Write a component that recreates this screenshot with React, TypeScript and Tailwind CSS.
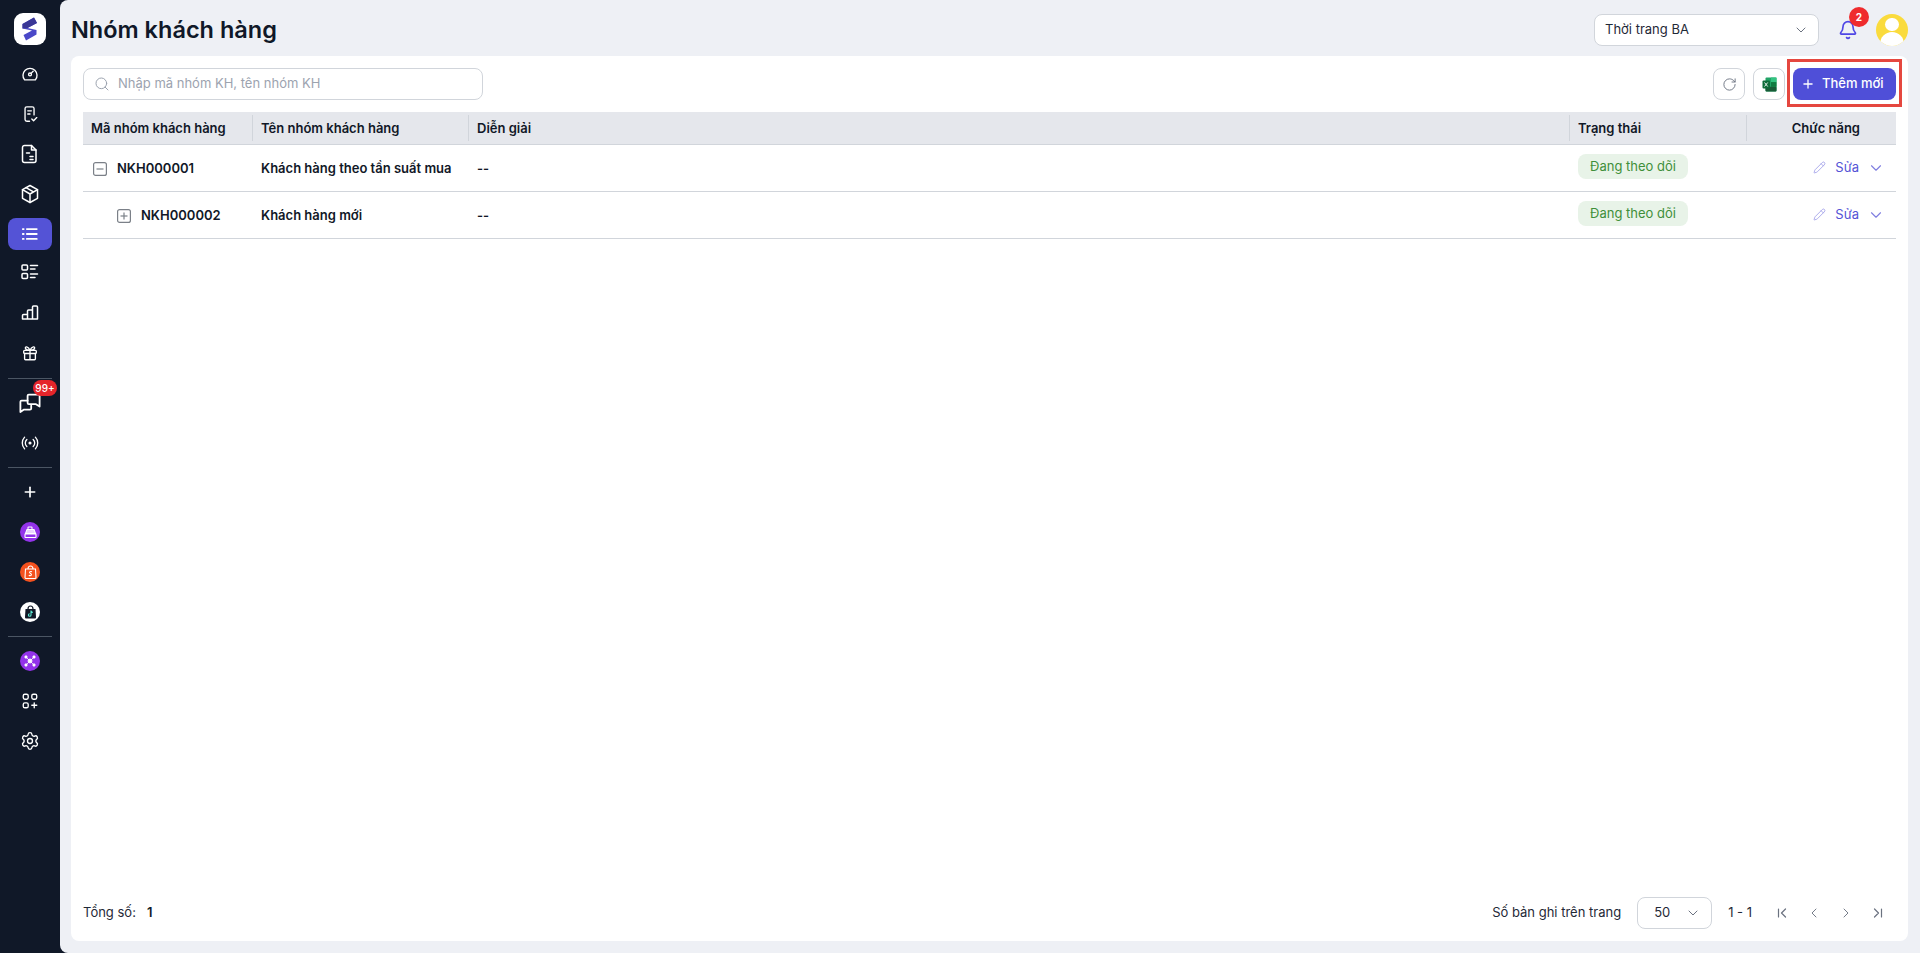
import { ChevronDown, Pencil, Plus, RotateCw, Search, Bell, ChevronLeft, ChevronRight, Settings } from "lucide-react";
import type { ReactNode } from "react";

const stroke = {
  fill: "none",
  stroke: "currentColor",
  strokeWidth: 1.5,
  strokeLinecap: "round" as const,
  strokeLinejoin: "round" as const,
};

function Ico({ children, size = 18 }: { children: ReactNode; size?: number }) {
  return (
    <svg width={size} height={size} viewBox="0 0 20 20" {...stroke}>
      {children}
    </svg>
  );
}

function Logo() {
  return (
    <svg width="20" height="24" viewBox="0 0 20 24">
      <path d="M14 0.500 L17 6 L7.500 11 L16.500 13 L16.500 17.500 L6 23.500 L3.500 18 L12 13.500 L2.500 11.500 L2.500 7 Z" fill="#4a48c8" />
      <path d="M14 0.500 L17 6 L7.500 11 L2.500 11.500 L2.500 7 Z" fill="#3a3796" />
    </svg>
  );
}

function Item({ children, cls = "mb-2" }: { children: ReactNode; cls?: string }) {
  return <div className={`w-8 h-8 flex items-center justify-center ${cls}`}>{children}</div>;
}

function Divider({ cls }: { cls: string }) {
  return <div className={`w-11 h-px bg-[#4b5563] ${cls}`} />;
}

function Sidebar() {
  return (
    <aside className="w-[60px] h-full shrink-0 bg-[#101828] flex flex-col items-center pt-[13px] text-white">
      <div className="w-8 h-8 rounded-[9px] bg-white flex items-center justify-center mb-[13px]">
        <Logo />
      </div>
      <Item>
        <Ico>
          <path d="M4 16.500 a7.800 7.800 0 1 1 12 0 Z" />
          <circle cx="10" cy="10.500" r="1.600" />
          <path d="M11.200 9.300 L13.500 7" />
        </Ico>
      </Item>
      <Item>
        <Ico>
          <path d="M9.500 18 H6.500 a2 2 0 0 1 -2 -2 V4 a2 2 0 0 1 2 -2 h6 a2 2 0 0 1 2 2 v7" />
          <path d="M7.500 6.500 h4 M7.500 10 h2.500" />
          <path d="M12 15.500 l2 2 l3.500 -3.500" />
        </Ico>
      </Item>
      <Item>
        <Ico size={20}>
          <path d="M4.500 1.500 h7 l4.500 4.500 v10.500 a2 2 0 0 1 -2 2 h-9.500 a2 2 0 0 1 -2 -2 v-13 a2 2 0 0 1 2 -2 Z" />
          <path d="M11.500 1.500 v4.500 h4.500" />
          <path d="M6.500 9 h3 M10 12.500 h3 M10 15.500 h3" />
        </Ico>
      </Item>
      <Item>
        <Ico size={20}>
          <path d="M10 1.500 l7.500 4.200 v8.600 l-7.500 4.200 l-7.500 -4.200 v-8.600 Z" />
          <path d="M2.500 5.700 l7.500 4.300 l7.500 -4.300 M10 10 v8.500 M6 3.600 l7.500 4.300" />
        </Ico>
      </Item>
      <div className="w-11 h-8 rounded-lg bg-[#5453d6] flex items-center justify-center mb-[6px]">
        <Ico size={18}>
          <path d="M6.500 4.500 h11 M6.500 10 h11 M6.500 15.500 h11" strokeWidth="2" />
          <path d="M2 4.500 h1 M2 10 h1 M2 15.500 h1" strokeWidth="2" />
        </Ico>
      </div>
      <Item>
        <Ico size={20}>
          <rect x="2" y="3" width="5.500" height="5" rx="1" />
          <rect x="2" y="11.500" width="5.500" height="5" rx="1" />
          <path d="M10.500 3.500 h7 M10.500 7 h4.500 M10.500 12 h7 M10.500 15.500 h4.500" />
        </Ico>
      </Item>
      <Item cls="mb-[9px]">
        <Ico size={20}>
          <path d="M2.500 17 v-3.500 a1 1 0 0 1 1 -1 h4 v4.500 Z M7.500 17 v-8 a1 1 0 0 1 1 -1 h3 a1 1 0 0 1 1 1 v8 Z M12.500 17 v-12 a1 1 0 0 1 1 -1 h3 a1 1 0 0 1 1 1 v12 Z" />
        </Ico>
      </Item>
      <Item cls="mb-0">
        <Ico>
          <rect x="3" y="7" width="14" height="3.500" rx="1" />
          <path d="M4 10.500 v6 a1 1 0 0 0 1 1 h10 a1 1 0 0 0 1 -1 v-6 M10 7 v10.500" />
          <path d="M10 7 C8 2 4 2.500 5 5 C5.500 6.500 8 7 10 7 C12 7 14.500 6.500 15 5 C16 2.500 12 2 10 7 Z" />
        </Ico>
      </Item>
      <Divider cls="mt-[9px] mb-2" />
      <div className="relative w-8 h-8 flex items-center justify-center mb-2">
        <Ico size={24}>
          <path d="M8 8 H3 a1 1 0 0 0 -1 1 v8.500 l3 -2 h5 a1 1 0 0 0 1 -1 v-2.500" />
          <path d="M9 3 h8 a1 1 0 0 1 1 1 v9 l-3 -2 h-6 a1 1 0 0 1 -1 -1 v-6 a1 1 0 0 1 1 -1 z" />
        </Ico>
        <span className="absolute -top-[7px] -right-[11px] h-4 w-6 rounded-full bg-[#e5252a] text-[10px] leading-4 text-center font-medium text-white">
          99+
        </span>
      </div>
      <Item cls="mb-0">
        <Ico size={18}>
          <circle cx="10" cy="10" r="1" fill="currentColor" />
          <path d="M6.500 6 a5.500 5.500 0 0 0 0 8 M13.500 6 a5.500 5.500 0 0 1 0 8 M4 3.500 a9.500 9.500 0 0 0 0 13 M16 3.500 a9.500 9.500 0 0 1 0 13" />
        </Ico>
      </Item>
      <Divider cls="mt-2 mb-2" />
      <Item>
        <Plus size={16} strokeWidth={2.5} />
      </Item>
      <Item>
        <span className="w-5 h-5 rounded-full bg-[#9333ea] flex items-center justify-center">
          <svg width="13" height="13" viewBox="0 0 13 13" fill="none" stroke="white" strokeWidth="1.100">
            <rect x="4" y="1" width="4" height="2.500" rx="0.500" />
            <path d="M3 3.500 h7 l1.500 4 h-10 Z" fill="#e9d5ff" />
            <rect x="1" y="8" width="11" height="3.500" rx="0.500" />
          </svg>
        </span>
      </Item>
      <Item>
        <span className="w-5 h-5 rounded-full bg-[#f4511e] flex items-center justify-center">
          <svg width="13" height="14" viewBox="0 0 13 14" fill="none" stroke="white" strokeWidth="1.100">
            <path d="M1.500 4 h10 l0.500 8.500 a1 1 0 0 1 -1 1 h-9 a1 1 0 0 1 -1 -1 Z" />
            <path d="M4 4 a2.500 3 0 0 1 5 0" />
            <path d="M8 6.800 C6 5.800 4.500 7.500 6.500 8.500 C8.500 9.500 7 11.500 4.800 10.300" />
          </svg>
        </span>
      </Item>
      <Item cls="mb-0">
        <span className="w-5 h-5 rounded-full bg-white flex items-center justify-center">
          <svg width="13" height="14" viewBox="0 0 13 14">
            <path d="M1.500 4 h10 l0.500 8.500 a1 1 0 0 1 -1 1 h-9 a1 1 0 0 1 -1 -1 Z" fill="#111827" />
            <path d="M4 4 a2.500 3 0 0 1 5 0" fill="none" stroke="#111827" strokeWidth="1.200" />
            <path d="M7 5.500 v4.500 a1.300 1.300 0 1 1 -1.300 -1.300 M7 5.800 c0.300 1 1 1.500 1.800 1.600" fill="none" stroke="#5eead4" strokeWidth="1.100" />
          </svg>
        </span>
      </Item>
      <Divider cls="mt-2 mb-2" />
      <Item>
        <span className="w-5 h-5 rounded-full bg-[#9333ea] flex items-center justify-center">
          <svg width="12" height="12" viewBox="0 0 12 12" fill="white" stroke="white" strokeWidth="0.800">
            <path d="M2 2 L10 10 M10 2 L2 10" />
            <circle cx="6" cy="6" r="2" />
            <circle cx="2" cy="2" r="1.200" />
            <circle cx="10" cy="2" r="1.200" />
            <circle cx="2" cy="10" r="1.200" />
            <circle cx="10" cy="10" r="1.200" />
          </svg>
        </span>
      </Item>
      <Item>
        <Ico size={18}>
          <rect x="2.500" y="2.500" width="5.500" height="5.500" rx="1.800" />
          <rect x="12" y="2.500" width="5.500" height="5.500" rx="1.800" />
          <rect x="2.500" y="12" width="5.500" height="5.500" rx="1.800" />
          <path d="M14.700 12 v5.500 M12 14.700 h5.500" />
        </Ico>
      </Item>
      <Item cls="mb-0">
        <Settings size={20} strokeWidth={1.6} />
      </Item>
    </aside>
  );
}

function ExcelIcon() {
  return (
    <svg width="15" height="15" viewBox="0 0 15 15">
      <rect x="3.500" y="0.500" width="11" height="14" rx="1" fill="#21a366" />
      <rect x="9" y="0.500" width="5.500" height="4.600" fill="#33c481" />
      <rect x="9" y="5.100" width="5.500" height="4.600" fill="#107c41" />
      <rect x="3.500" y="9.700" width="11" height="4.800" rx="1" fill="#185c37" />
      <rect x="0.500" y="3.500" width="7.500" height="8" rx="1" fill="#0f6b3a" />
      <path d="M2.500 5.500 L5.700 9.500 M5.700 5.500 L2.500 9.500" stroke="white" strokeWidth="0.900" />
    </svg>
  );
}

function TreeBox({ open }: { open: boolean }) {
  return (
    <svg width="14" height="14" viewBox="0 0 14 14" fill="none" stroke="#7b8088" strokeWidth="1.200">
      <rect x="0.600" y="0.600" width="12.800" height="12.800" rx="2" />
      <path d="M3.500 7 h7" />
      {!open && <path d="M7 3.500 v7" />}
    </svg>
  );
}

const rows = [
  { code: "NKH000001", name: "Khách hàng theo tần suất mua", open: true, indent: "pl-[10px]" },
  { code: "NKH000002", name: "Khách hàng mới", open: false, indent: "pl-[34px]" },
];

function Row({ code, name, open, indent }: (typeof rows)[number]) {
  return (
    <div className="flex h-[47px] border-b border-[#d1d5db] text-[13px] font-semibold text-[#111827]">
      <div className={`w-[170px] shrink-0 flex items-center gap-[10px] pt-[1px] ${indent}`}>
        <TreeBox open={open} />
        <span>{code}</span>
      </div>
      <div className="w-[216px] shrink-0 flex items-center pl-2 pt-[1px] whitespace-nowrap">{name}</div>
      <div className="flex-1 flex items-center pl-2 pt-[1px]">--</div>
      <div className="w-[177px] shrink-0 flex items-start pt-[9px] pl-2">
        <span className="h-[25px] w-[110px] rounded-lg bg-[#e8f3e8] text-[#3f8f3a] font-normal flex items-center justify-center">
          Đang theo dõi
        </span>
      </div>
      <div className="w-[149px] shrink-0 flex items-center justify-end pr-[11px] pb-[1px] font-normal text-[#5453d6]">
        <Pencil size={13} strokeWidth={1.5} className="text-[#9c9be8] mr-[9px]" />
        <span>Sửa</span>
        <ChevronDown size={18} strokeWidth={1.5} className="text-[#7f7ee0] ml-2" />
      </div>
    </div>
  );
}

function FirstPage() {
  return (
    <svg width="16" height="16" viewBox="0 0 16 16" fill="none" stroke="currentColor" strokeWidth="1.200" strokeLinecap="round" strokeLinejoin="round">
      <path d="M4.500 4 v8 M11.500 4 l-4 4 l4 4" />
    </svg>
  );
}

function LastPage() {
  return (
    <svg width="16" height="16" viewBox="0 0 16 16" fill="none" stroke="currentColor" strokeWidth="1.200" strokeLinecap="round" strokeLinejoin="round">
      <path d="M11.500 4 v8 M4.500 4 l4 4 l-4 4" />
    </svg>
  );
}

export default function App() {
  return (
    <div className="flex h-[953px] w-full overflow-hidden bg-[#101828] font-['Inter',sans-serif]">
      <Sidebar />
      <main className="flex-1 min-w-0 h-full flex flex-col bg-[#eef0f5] rounded-l-lg pl-[11px] pr-3 pb-3">
        <header className="h-14 shrink-0 flex items-center pt-1">
          <h1 className="text-[23.5px] font-semibold text-[#101828] leading-8">Nhóm khách hàng</h1>
          <div className="ml-auto flex items-center">
            <div className="w-[225px] h-8 rounded-lg border border-[#d1d5db] bg-white flex items-center pl-[10px] pr-[9px] text-[13px] text-[#1f2937]">
              <span>Thời trang BA</span>
              <ChevronDown size={16} strokeWidth={1.5} className="ml-auto text-[#6b7280]" />
            </div>
            <div className="relative ml-[19px] mr-[18px] text-[#4f46e5]">
              <Bell size={20} strokeWidth={2} />
              <span className="absolute -top-[13px] left-[11px] w-5 h-5 rounded-full bg-[#ef2b2d] text-white text-[10px] font-bold flex items-center justify-center">
                2
              </span>
            </div>
            <div className="w-8 h-8 rounded-full bg-[#fadb3d] overflow-hidden flex flex-col items-center">
              <div className="w-[14px] h-[14px] rounded-full bg-white mt-1" />
              <div className="w-6 h-4 rounded-t-full bg-white mt-[1px]" />
            </div>
          </div>
        </header>

        <section className="flex-1 min-h-0 bg-white rounded-lg flex flex-col px-3 pt-3">
          <div className="flex items-center h-8 shrink-0">
            <div className="w-[400px] h-8 rounded-lg border border-[#d1d5db] flex items-center pl-[10px] text-[13px] text-[#9ca3af]">
              <Search size={16} strokeWidth={1.5} className="text-[#9ca3af] mr-2" />
              <span>Nhập mã nhóm KH, tên nhóm KH</span>
            </div>
            <div className="ml-auto flex items-center">
              <button className="w-8 h-8 rounded-lg border border-[#d1d5db] flex items-center justify-center text-[#6b7280]">
                <RotateCw size={15} strokeWidth={1.5} />
              </button>
              <button className="ml-2 w-8 h-8 rounded-lg border border-[#d1d5db] flex items-center justify-center">
                <ExcelIcon />
              </button>
              <div className="relative ml-2">
                <button className="w-[103px] h-8 rounded-lg bg-[#4f4fd8] text-white text-[13px] font-medium flex items-center pl-2 gap-[7px]">
                  <Plus size={14} strokeWidth={2.2} />
                  Thêm mới
                </button>
                <div className="absolute -top-[9px] -left-[6px] -right-[6px] -bottom-[7px] border-[3px] border-[#e5473f] pointer-events-none" />
              </div>
            </div>
          </div>

          <div className="mt-3 flex h-[33px] shrink-0 items-center bg-[#e5e7ec] border-b border-[#d1d5db] text-[13px] font-semibold text-[#111827]">
            <div className="w-[170px] shrink-0 pl-2 border-r border-[#d1d5db] leading-[26px]">Mã nhóm khách hàng</div>
            <div className="w-[216px] shrink-0 pl-2 border-r border-[#d1d5db] leading-[26px]">Tên nhóm khách hàng</div>
            <div className="flex-1 pl-2 border-r border-[#d1d5db] leading-[26px]">Diễn giải</div>
            <div className="w-[177px] shrink-0 pl-2 border-r border-[#d1d5db] leading-[26px]">Trạng thái</div>
            <div className="w-[149px] shrink-0 pr-[36px] text-right leading-[26px]">Chức năng</div>
          </div>

          {rows.map((r) => (
            <Row key={r.code} {...r} />
          ))}

          <footer className="mt-auto h-[57px] shrink-0 flex items-start pt-[13px] text-[13px] text-[#1f2937]">
            <div className="h-8 flex items-center">
              Tổng số:
              <span className="ml-[11px] font-semibold text-[#101828]">1</span>
            </div>
            <div className="ml-auto h-8 flex items-center pr-[10px]">
              <span>Số bản ghi trên trang</span>
              <div className="ml-4 w-[75px] h-8 rounded-lg border border-[#d1d5db] flex items-center pl-4 pr-[10px]">
                <span>50</span>
                <ChevronDown size={16} strokeWidth={1.5} className="ml-auto text-[#6b7280]" />
              </div>
              <span className="ml-4">1 - 1</span>
              <div className="ml-[22px] flex items-center text-[#6b7280] gap-4">
                <FirstPage />
                <ChevronLeft size={16} strokeWidth={1.4} />
                <ChevronRight size={16} strokeWidth={1.4} />
                <LastPage />
              </div>
            </div>
          </footer>
        </section>
      </main>
    </div>
  );
}
